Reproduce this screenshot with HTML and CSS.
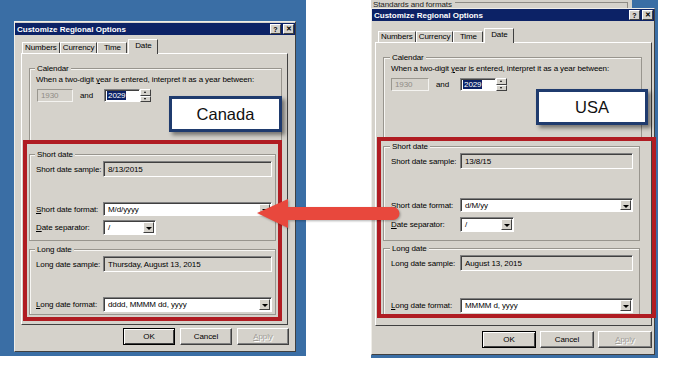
FILE: index.html
```html
<!DOCTYPE html>
<html lang="en">
<head>
  <meta charset="UTF-8">
  <meta name="viewport" content="width=device-width, initial-scale=1.0">
  <title>Regional Options - Canada vs USA</title>
  <link rel="stylesheet" href="styles.css">
</head>
<body>
  <div class="page">

    <!-- Canada screenshot -->
    <div class="shot shot-ca">
      <div class="dlg dlg-ca">
        <div class="titlebar">
          <span class="title">Customize Regional Options</span>
          <span class="tb-btns"><span class="tb-btn">?</span><span class="tb-btn">&#x2715;</span></span>
        </div>
        <div class="tabs">
          <span class="tab">Numbers</span>
          <span class="tab">Currency</span>
          <span class="tab">Time</span>
          <span class="tab tab-on">Date</span>
        </div>
        <div class="panel">
          <div class="grp grp-cal">
            <span class="grp-title">Calendar</span>
            <div class="cal-text">When a two-digit <u>y</u>ear is entered, interpret it as a year between:</div>
            <div class="cal-row">
              <span class="box box-off">1930</span>
              <span class="and">and</span>
              <span class="box box-edit"><span class="hl">2029</span></span>
              <span class="spin"><span class="spin-btn spin-up"></span><span class="spin-btn spin-down"></span></span>
            </div>
          </div>
          <div class="grp grp-short">
            <span class="grp-title">Short date</span>
            <div class="row row-sample"><span class="lbl">Short date sample:</span><span class="box box-ro">8/13/2015</span></div>
            <div class="row row-fmt"><span class="lbl"><u>S</u>hort date format:</span><span class="combo"><span class="combo-val">M/d/yyyy</span><span class="drop"></span></span></div>
            <div class="row row-sep"><span class="lbl"><u>D</u>ate separator:</span><span class="combo combo-sm"><span class="combo-val">/</span><span class="drop"></span></span></div>
          </div>
          <div class="grp grp-long">
            <span class="grp-title">Long date</span>
            <div class="row row-sample"><span class="lbl">Long date sample:</span><span class="box box-ro">Thursday, August 13, 2015</span></div>
            <div class="row row-lfmt"><span class="lbl"><u>L</u>ong date format:</span><span class="combo"><span class="combo-val">dddd, MMMM dd, yyyy</span><span class="drop"></span></span></div>
          </div>
        </div>
        <div class="buttons">
          <span class="btn btn-def">OK</span>
          <span class="btn">Cancel</span>
          <span class="btn btn-off"><u>A</u>pply</span>
        </div>
        <div class="redbox"></div>
        <div class="callout">Canada</div>
      </div>
    </div>

    <!-- USA screenshot -->
    <div class="shot shot-us">
      <div class="bgwin"><span class="bgwin-text">Standards and formats</span><span class="bgwin-line"></span></div>
      <div class="dlg dlg-us">
        <div class="titlebar">
          <span class="title">Customize Regional Options</span>
          <span class="tb-btns"><span class="tb-btn">?</span><span class="tb-btn">&#x2715;</span></span>
        </div>
        <div class="tabs">
          <span class="tab">Numbers</span>
          <span class="tab">Currency</span>
          <span class="tab">Time</span>
          <span class="tab tab-on">Date</span>
        </div>
        <div class="panel">
          <div class="grp grp-cal">
            <span class="grp-title">Calendar</span>
            <div class="cal-text">When a two-digit <u>y</u>ear is entered, interpret it as a year between:</div>
            <div class="cal-row">
              <span class="box box-off">1930</span>
              <span class="and">and</span>
              <span class="box box-edit"><span class="hl">2029</span></span>
              <span class="spin"><span class="spin-btn spin-up"></span><span class="spin-btn spin-down"></span></span>
            </div>
          </div>
          <div class="grp grp-short">
            <span class="grp-title">Short date</span>
            <div class="row row-sample"><span class="lbl">Short date sample:</span><span class="box box-ro">13/8/15</span></div>
            <div class="row row-fmt"><span class="lbl"><u>S</u>hort date format:</span><span class="combo"><span class="combo-val">d/M/yy</span><span class="drop"></span></span></div>
            <div class="row row-sep"><span class="lbl"><u>D</u>ate separator:</span><span class="combo combo-sm"><span class="combo-val">/</span><span class="drop"></span></span></div>
          </div>
          <div class="grp grp-long">
            <span class="grp-title">Long date</span>
            <div class="row row-sample"><span class="lbl">Long date sample:</span><span class="box box-ro">August 13, 2015</span></div>
            <div class="row row-lfmt"><span class="lbl"><u>L</u>ong date format:</span><span class="combo"><span class="combo-val">MMMM d, yyyy</span><span class="drop"></span></span></div>
          </div>
        </div>
        <div class="buttons">
          <span class="btn btn-def">OK</span>
          <span class="btn">Cancel</span>
          <span class="btn btn-off"><u>A</u>pply</span>
        </div>
        <div class="redbox"></div>
        <div class="callout">USA</div>
      </div>
    </div>

    <svg class="arrow" width="148" height="38" viewBox="0 0 148 38">
      <path d="M2 18 L33 4 L33 12 L138 12 A6.5 6.5 0 0 1 138 25 L33 25 L33 33 Z" fill="#e8483d"/>
    </svg>
  </div>
</body>
</html>
```

FILE: styles.css
```css
body {
  margin: 0;
  background: #fff;
  font-family: "Liberation Sans", Arial, sans-serif;
  font-size: 8px;
  letter-spacing: -0.1px;
  color: #000;
}

.page {
  position: relative;
  display: flex;
  align-items: flex-start;
  width: 687px;
  height: 374px;
}

/* desktop around each dialog */
.shot {
  box-sizing: border-box;
  background: #3a6ea5;
}

.shot-ca {
  width: 306px;
  height: 356px;
  padding: 21px 0 0 14px;
}

.shot-us {
  margin-left: 65px;
  width: 287px;
  height: 358px;
}

.bgwin {
  display: flex;
  align-items: flex-end;
  width: 261px;
  height: 8px;
  padding-left: 2px;
  box-sizing: border-box;
  background: #d5d2cb;
  overflow: hidden;
}

.bgwin-text {
  line-height: 9px;
  margin-bottom: -1px;
  color: #222;
}

.bgwin-line {
  flex: 1;
  align-self: center;
  margin: 1px 4px 0 3px;
  height: 8px;
  border-top: 1px solid #8e8b85;
  border-right: 1px solid #8e8b85;
  margin-bottom: -4px;
}

/* dialog window */
.dlg {
  --dlg-w: 282px;
  --dlg-h: 331px;
  --dlg-pt: 1px;
  --tabs-mt: 4px;
  --tabs-ml: 7px;
  --panel-ml: 6px;
  --panel-w: 267px;
  --panel-h: 272px;
  --panel-pl: 7px;
  --cal-w: 253px;
  --cal-h: 74px;
  --off-w: 36px;
  --off-ml: 1px;
  --grp-w: 247px;
  --grp-pl: 6px;
  --lbl-w: 67px;
  --fld-w: 169px;
  --sep-w: 53px;
  --short-mt: 12px;
  --fmt-mt: 25px;
  --sep-mt: 4px;
  --short-pb: 5px;
  --long-mt: 8px;
  --lfmt-mt: 25px;
  --long-pb: 2px;
  --btns-mt: 3px;
  --btns-pr: 6px;
  --btn-w: 52px;
  --btn-gap: 5px;

  position: relative;
  display: flex;
  flex-direction: column;
  box-sizing: border-box;
  width: var(--dlg-w);
  height: var(--dlg-h);
  padding-top: var(--dlg-pt);
  background: #d5d2cb;
  border: 1px solid;
  border-color: #efede8 #404040 #404040 #efede8;
}

.dlg-us {
  --dlg-w: 284px;
  --dlg-h: 347px;
  --dlg-pt: 0px;
  --tabs-mt: 7px;
  --tabs-ml: 6px;
  --panel-ml: 3px;
  --panel-w: 277px;
  --panel-h: 284px;
  --panel-pl: 7px;
  --cal-w: 259px;
  --cal-h: 82px;
  --off-w: 38px;
  --off-ml: 0px;
  --grp-w: 257px;
  --grp-pl: 7px;
  --lbl-w: 69px;
  --fld-w: 173px;
  --sep-w: 54px;
  --short-mt: 7px;
  --fmt-mt: 29px;
  --sep-mt: 5px;
  --short-pb: 8px;
  --long-mt: 7px;
  --lfmt-mt: 27px;
  --long-pb: 1px;
  --btns-mt: 5px;
  --btns-pr: 2px;
  --btn-w: 54px;
  --btn-gap: 4px;
}

.titlebar {
  display: flex;
  align-items: center;
  justify-content: space-between;
  height: 12px;
  padding: 0 1px 0 2px;
  background: #0c2266;
  color: #fff;
}

.title {
  font-weight: bold;
  letter-spacing: 0;
}

.tb-btns {
  display: flex;
  gap: 2px;
}

.tb-btn {
  display: flex;
  align-items: center;
  justify-content: center;
  box-sizing: border-box;
  width: 11px;
  height: 10px;
  background: #d5d2cb;
  border: 1px solid;
  border-color: #fff #404040 #404040 #fff;
  color: #000;
  font-weight: bold;
  font-size: 7px;
  letter-spacing: 0;
}

/* tabs */
.tabs {
  display: flex;
  align-items: flex-end;
  height: 14px;
  margin: var(--tabs-mt) 0 0 var(--tabs-ml);
}

.tab {
  box-sizing: border-box;
  height: 11px;
  min-width: 30px;
  padding: 0 2px;
  line-height: 10px;
  text-align: center;
  border-top: 1px solid #fff;
  border-left: 1px solid #fff;
  border-right: 1px solid #404040;
}

.tab-on {
  position: relative;
  z-index: 1;
  height: 15px;
  margin-bottom: -1px;
  margin-left: 1px;
  line-height: 12px;
  background: #d5d2cb;
}

/* tab page */
.panel {
  box-sizing: border-box;
  width: var(--panel-w);
  height: var(--panel-h);
  margin-left: var(--panel-ml);
  padding: 14px 0 0 var(--panel-pl);
  border: 1px solid;
  border-color: #fff #404040 #404040 #fff;
}

/* group boxes */
.grp {
  box-sizing: border-box;
  width: var(--grp-w);
  padding: 0 0 0 var(--grp-pl);
  border: 1px solid #98958e;
  box-shadow: inset 1px 1px 0 #f6f5f2;
}

.grp-title {
  display: table;
  margin: -6px 0 0 -1px;
  padding: 0 2px;
  line-height: 11px;
  background: #d5d2cb;
}

.grp-cal {
  width: var(--cal-w);
  height: var(--cal-h);
}

.grp-short {
  margin-top: var(--short-mt);
  padding-bottom: var(--short-pb);
}

.grp-long {
  margin-top: var(--long-mt);
  padding-bottom: var(--long-pb);
}

.cal-text {
  margin-top: 1px;
  line-height: 10px;
}

.cal-row {
  display: flex;
  align-items: center;
  height: 13px;
  margin-top: 4px;
}

.and {
  margin: 0 11px 0 7px;
}

.row {
  display: flex;
  align-items: center;
  height: 16px;
}

.row-sample {
  margin-top: 1px;
}

.row-fmt {
  margin-top: var(--fmt-mt);
  height: 14px;
}

.row-sep {
  margin-top: var(--sep-mt);
  height: 15px;
}

.row-lfmt {
  margin-top: var(--lfmt-mt);
  height: 15px;
}

.lbl {
  width: var(--lbl-w);
  flex: none;
  white-space: nowrap;
}

/* edit fields */
.box,
.combo {
  display: flex;
  align-items: center;
  box-sizing: border-box;
  height: 100%;
  border: 1px solid;
  border-color: #808080 #fff #fff #808080;
  box-shadow: inset 1px 1px 0 #404040;
}

.box-ro {
  width: var(--fld-w);
  padding-left: 4px;
  background: #d5d2cb;
}

.box-off {
  width: var(--off-w);
  margin-left: var(--off-ml);
  padding-left: 3px;
  color: #8f8c86;
  background: #d5d2cb;
  box-shadow: none;
  border-color: #9a978f #f4f3f0 #f4f3f0 #9a978f;
}

.box-edit {
  width: 36px;
  padding-left: 2px;
  background: #fff;
}

.hl {
  padding: 0 1px;
  background: #0c2266;
  color: #fff;
  line-height: 9px;
}

.spin {
  display: flex;
  flex-direction: column;
  width: 11px;
  height: 13px;
}

.spin-btn {
  position: relative;
  flex: 1;
  box-sizing: border-box;
  border: 1px solid;
  border-color: #fff #404040 #404040 #fff;
  background: #d5d2cb;
}

.spin-btn::after {
  content: "";
  position: absolute;
  left: 3px;
  top: 1px;
  border-left: 1.5px solid transparent;
  border-right: 1.5px solid transparent;
}

.spin-up::after {
  border-bottom: 2px solid #000;
}

.spin-down::after {
  border-top: 2px solid #000;
}

.combo {
  width: var(--fld-w);
  padding: 1px 1px 1px 0;
  background: #fff;
}

.combo-sm {
  width: var(--sep-w);
}

.combo-val {
  flex: 1;
  padding-left: 4px;
}

.drop {
  position: relative;
  box-sizing: border-box;
  width: 11px;
  height: 100%;
  border: 1px solid;
  border-color: #fff #404040 #404040 #fff;
  background: #d5d2cb;
}

.drop::after {
  content: "";
  position: absolute;
  left: 2px;
  top: 4px;
  border-top: 3px solid #000;
  border-left: 3px solid transparent;
  border-right: 3px solid transparent;
}

/* OK / Cancel / Apply */
.buttons {
  display: flex;
  justify-content: flex-end;
  gap: var(--btn-gap);
  margin-top: var(--btns-mt);
  padding-right: var(--btns-pr);
}

.btn {
  display: flex;
  align-items: center;
  justify-content: center;
  box-sizing: border-box;
  width: var(--btn-w);
  height: 17px;
  border: 1px solid;
  border-color: #fff #404040 #404040 #fff;
  box-shadow: inset -1px -1px 0 #808080;
}

.btn-def {
  border-color: #000;
  box-shadow: inset 1px 1px 0 #fff, inset -1px -1px 0 #404040;
}

.btn-off {
  color: #a19e98;
  text-shadow: 1px 1px 0 #fff;
}

/* annotations */
.redbox {
  position: absolute;
  left: 8px;
  top: 118px;
  width: 259px;
  height: 181px;
  box-sizing: border-box;
  border: 4px solid #b01c22;
  pointer-events: none;
}

.dlg-us .redbox {
  left: 5px;
  top: 128px;
  width: 279px;
  height: 181px;
}

.callout {
  position: absolute;
  left: 154px;
  top: 74px;
  display: flex;
  align-items: center;
  justify-content: center;
  box-sizing: border-box;
  width: 113px;
  height: 36px;
  background: #fff;
  border: 3px solid #1f3b6e;
  box-shadow: 3px 3px 4px rgba(0, 0, 0, 0.45);
  font-size: 16.5px;
  letter-spacing: 0;
  color: #111;
}

.dlg-us .callout {
  left: 164px;
  top: 80px;
  width: 112px;
}

.arrow {
  position: absolute;
  left: 255px;
  top: 195px;
  filter: drop-shadow(1px 1px 1px rgba(0, 0, 0, 0.3));
}
```
